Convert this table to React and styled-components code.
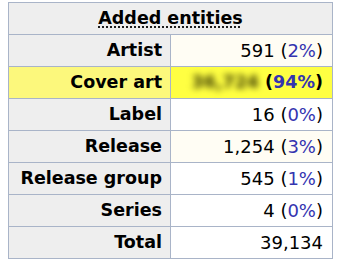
import React from "react";
import styled, { createGlobalStyle } from "styled-components";

const Global = createGlobalStyle`
  html, body { margin: 0; padding: 0; background: #fff; }
  body { font-family: "DejaVu Sans", Verdana, sans-serif; color: #000; }
`;

const Page = styled.div`
  padding: 2px 0 0 8px;
`;

const Table = styled.table`
  border-collapse: collapse;
  border: 1px solid #a9b4c8;
  table-layout: fixed;
  width: 325px;
`;

const HeadCell = styled.th`
  background: #eeeeee;
  border: 1px solid #a9b4c8;
  font-size: 17.5px;
  font-weight: bold;
  text-align: center;
  line-height: 23px;
  padding: 4px 8px;
`;

const Abbr = styled.abbr`
  text-decoration: underline dotted;
  text-underline-offset: 3px;
  cursor: help;
`;

const LabelCell = styled.th`
  width: 140px;
  background: ${(p) => (p.$hl ? "#fcf87c" : "#eeeeee")};
  border: 1px solid #a9b4c8;
  font-size: 17.5px;
  font-weight: bold;
  text-align: right;
  line-height: 23px;
  padding: 4px 8px;
  white-space: nowrap;
`;

const ValueCell = styled.td`
  background: ${(p) => (p.$hl ? "#ffff42" : p.$cream ? "#fffdf4" : "#ffffff")};
  border: 1px solid #a9b4c8;
  font-weight: ${(p) => (p.$hl ? "bold" : "normal")};
  font-size: ${(p) => (p.$hl ? "17.5px" : "18px")};
  text-align: right;
  line-height: 23px;
  padding: 4px 9px 4px 8px;
  white-space: nowrap;
`;

const Pct = styled.span`
  color: #3434b0;
`;

const Hidden = styled.span`
  color: #3a3a00;
  filter: blur(3px);
  display: inline-block;
`;

const rows = [
  { label: "Artist", value: "591", pct: "2", cream: true },
  { label: "Cover art", value: "36,724", pct: "94", hl: true },
  { label: "Label", value: "16", pct: "0" },
  { label: "Release", value: "1,254", pct: "3", cream: true },
  { label: "Release group", value: "545", pct: "1" },
  { label: "Series", value: "4", pct: "0" },
  { label: "Total", value: "39,134" },
];

export default function App() {
  return (
    <Page>
      <Global />
      <Table>
        <thead>
          <tr>
            <HeadCell colSpan={2}>
              <Abbr title="Entities added in the period">Added entities</Abbr>
            </HeadCell>
          </tr>
        </thead>
        <tbody>
          {rows.map((r) => (
            <tr key={r.label}>
              <LabelCell $hl={r.hl}>{r.label}</LabelCell>
              <ValueCell $hl={r.hl} $cream={r.cream}>
                {r.hl ? <Hidden>{r.value}&nbsp;</Hidden> : <>{r.value} </>}
                {r.pct !== undefined && (
                  <>
                    (<Pct>{r.pct}%</Pct>)
                  </>
                )}
              </ValueCell>
            </tr>
          ))}
        </tbody>
      </Table>
    </Page>
  );
}
